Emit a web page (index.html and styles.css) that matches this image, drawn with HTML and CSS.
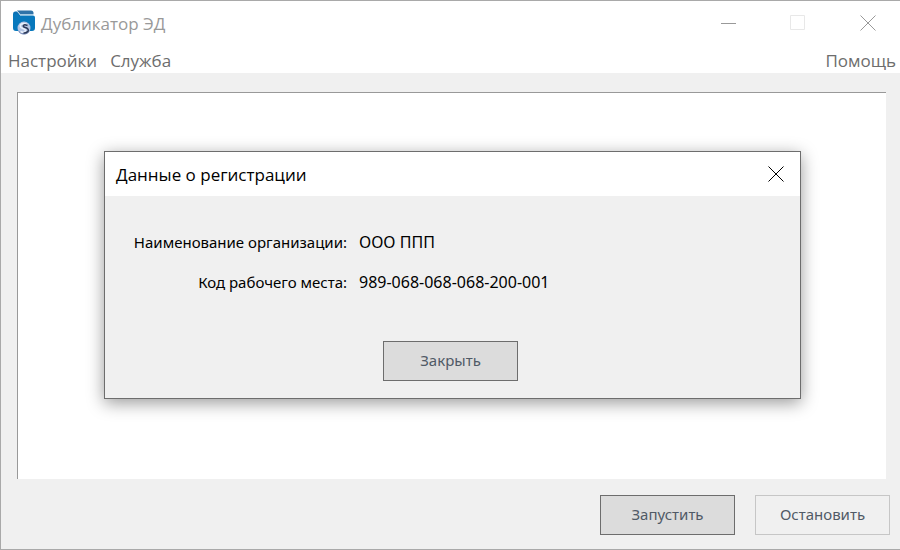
FILE: index.html
```html
<!DOCTYPE html>
<html lang="ru">
<head>
    <meta charset="UTF-8">
    <meta name="viewport" content="width=device-width, initial-scale=1.0">
    <title>Дубликатор ЭД</title>
    <link rel="stylesheet" href="styles.css">
</head>
<body>
    <div class="window">
        <header class="titlebar">
            <svg class="app-icon" width="24" height="26" viewBox="0 0 24 26">
                <path d="M1 4 Q1 1.5 3 1.5 H5 L8 5 V9 H1 Z" fill="#0b70b4"/>
                <path d="M5 0.5 H19 Q21.5 0.5 21.5 3 V4 H8 Z" fill="#2f73a8"/>
                <path d="M7.5 4.5 H21.5" stroke="#a9cbe2"/>
                <path d="M1 4 H6 L8 5.5 H21 Q23 5.5 23 7.5 V18 Q23 21 20 21 H4 Q1 21 1 18 Z" fill="#0878bc"/>
                <circle cx="12" cy="18" r="6.5" fill="#b4c5e4"/>
                <path d="M6 20.5 A6.5 6.5 0 0 0 18 20.5 Q13 25 6 20.5 Z" fill="#7d90bb"/>
                <path d="M15 14.5 Q10 12.5 8.5 15 Q7.5 17.5 11 18.5 Q14.5 19.5 13 21.5 Q11.5 23 8.5 21.5" fill="none" stroke="#e9f0fb" stroke-width="1.6"/>
                <path d="M15.5 15.5 Q12 14 11.3 15.7 Q11.2 17 14 17.8 Q17.2 19 16 21.3 Q14.5 23.3 11.5 23" fill="none" stroke="#2c3856" stroke-width="1.5"/>
            </svg>
            <h1 class="app-title">Дубликатор ЭД</h1>
            <div class="window-controls">
                <button class="control" type="button" aria-label="Свернуть">
                    <svg width="16" height="16"><path d="M1 8.5 H16"/></svg>
                </button>
                <button class="control" type="button" aria-label="Развернуть" disabled>
                    <svg width="16" height="16"><path d="M0.5 0.5 H14.5 V14.5 H0.5 Z"/></svg>
                </button>
                <button class="control" type="button" aria-label="Закрыть окно">
                    <svg width="16" height="16"><path d="M0.5 0.5 L15.5 15.5 M15.5 0.5 L0.5 15.5"/></svg>
                </button>
            </div>
        </header>

        <nav class="menu">
            <a href="#settings">Настройки</a>
            <a href="#service">Служба</a>
            <a class="menu-help" href="#help">Помощь</a>
        </nav>

        <main class="content">
            <div class="log">
                <dialog class="dialog" open aria-labelledby="dialog-title">
                    <div class="dialog-header">
                        <h2 class="dialog-title" id="dialog-title">Данные о регистрации</h2>
                        <button class="dialog-close" type="button" aria-label="Закрыть">
                            <svg width="16" height="16"><path d="M0.5 0.5 L15.5 15.5 M15.5 0.5 L0.5 15.5"/></svg>
                        </button>
                    </div>
                    <div class="dialog-body">
                        <dl class="details">
                            <dt>Наименование организации:</dt>
                            <dd>ООО ППП</dd>
                            <dt>Код рабочего места:</dt>
                            <dd>989-068-068-068-200-001</dd>
                        </dl>
                        <button class="button" type="button">Закрыть</button>
                    </div>
                </dialog>
            </div>
            <div class="actions">
                <button class="button" type="button">Запустить</button>
                <button class="button" type="button" disabled>Остановить</button>
            </div>
        </main>
    </div>
</body>
</html>
```
FILE: styles.css
```css
* {
    box-sizing: border-box;
}

body {
    margin: 0;
    font-family: "Noto Sans", "Open Sans", sans-serif;
    font-size: 15px;
    color: #000;
}

.window {
    display: flex;
    flex-direction: column;
    min-height: 100vh;
    background: #f0f0f0;
    border: 1px solid #a9a9a9;
    border-right: 0;
}

/* Заголовок окна */
.titlebar {
    display: flex;
    align-items: center;
    height: 44px;
    padding-left: 11px;
    background: #fff;
}

.app-title {
    margin: 0 0 0 5px;
    font-family: "Open Sans", sans-serif;
    font-size: 17px;
    font-weight: 400;
    color: #999;
}

.window-controls {
    display: flex;
    gap: 24px;
    margin-left: auto;
    padding-right: 9px;
}

.control,
.dialog-close {
    display: flex;
    align-items: center;
    justify-content: center;
    width: 46px;
    height: 32px;
    padding: 0;
    background: none;
    border: 0;
}

.control path,
.dialog-close path {
    fill: none;
    stroke: #999;
}

.control:disabled path {
    stroke: #e8e8e8;
}

/* Меню */
.menu {
    display: flex;
    align-items: center;
    gap: 13px;
    height: 28px;
    padding: 2px 4px 0 7px;
    background: #fff;
    font-family: "Open Sans", sans-serif;
    font-size: 17px;
}

.menu a {
    color: #6d6d6d;
    text-decoration: none;
}

.menu-help {
    margin-left: auto;
}

/* Рабочая область */
.content {
    display: flex;
    flex: 1;
    flex-direction: column;
    padding: 19px 10px 14px 16px;
}

.log {
    position: relative;
    flex: 1;
    min-height: 320px;
    margin-right: 4px;
    background: #fff;
    border: solid #999;
    border-width: 1px 0 0 1px;
}

.actions {
    display: flex;
    justify-content: flex-end;
    gap: 20px;
    margin-top: 16px;
}

.button {
    width: 135px;
    height: 40px;
    padding: 0 0 2px;
    background: #dcdcdc;
    border: 1px solid #6d6d6d;
    font-family: inherit;
    font-size: 15px;
    color: #505a66;
}

.button:disabled {
    background: #f0f0f0;
    border-color: #c6c6c6;
}

/* Диалог */
.dialog {
    position: absolute;
    top: 58px;
    right: 85px;
    left: 86px;
    width: auto;
    margin: 0;
    padding: 0;
    background: #f0f0f0;
    border: 1px solid #6d6d6d;
    box-shadow: 0 4px 16px rgba(0, 0, 0, 0.4);
    color: #000;
}

.dialog-header {
    display: flex;
    align-items: center;
    justify-content: space-between;
    height: 44px;
    padding: 0 1px 0 11px;
    background: #fff;
}

.dialog-title {
    margin: 0;
    font-family: "Open Sans", sans-serif;
    font-size: 17px;
    font-weight: 400;
}

.dialog-close path {
    stroke: #000;
}

.dialog-body {
    display: flex;
    flex-direction: column;
    align-items: center;
    padding: 36px 32px 17px 28px;
}

.details {
    display: grid;
    grid-template-columns: 214px 1fr;
    gap: 20px 12px;
    align-self: stretch;
    margin: 0 0 49px;
    line-height: 20px;
}

.details dt {
    text-align: right;
    white-space: nowrap;
}

.details dd {
    margin: 0;
    font-size: 16px;
}

.dialog-body .button {
    margin: 0 auto;
}
```
